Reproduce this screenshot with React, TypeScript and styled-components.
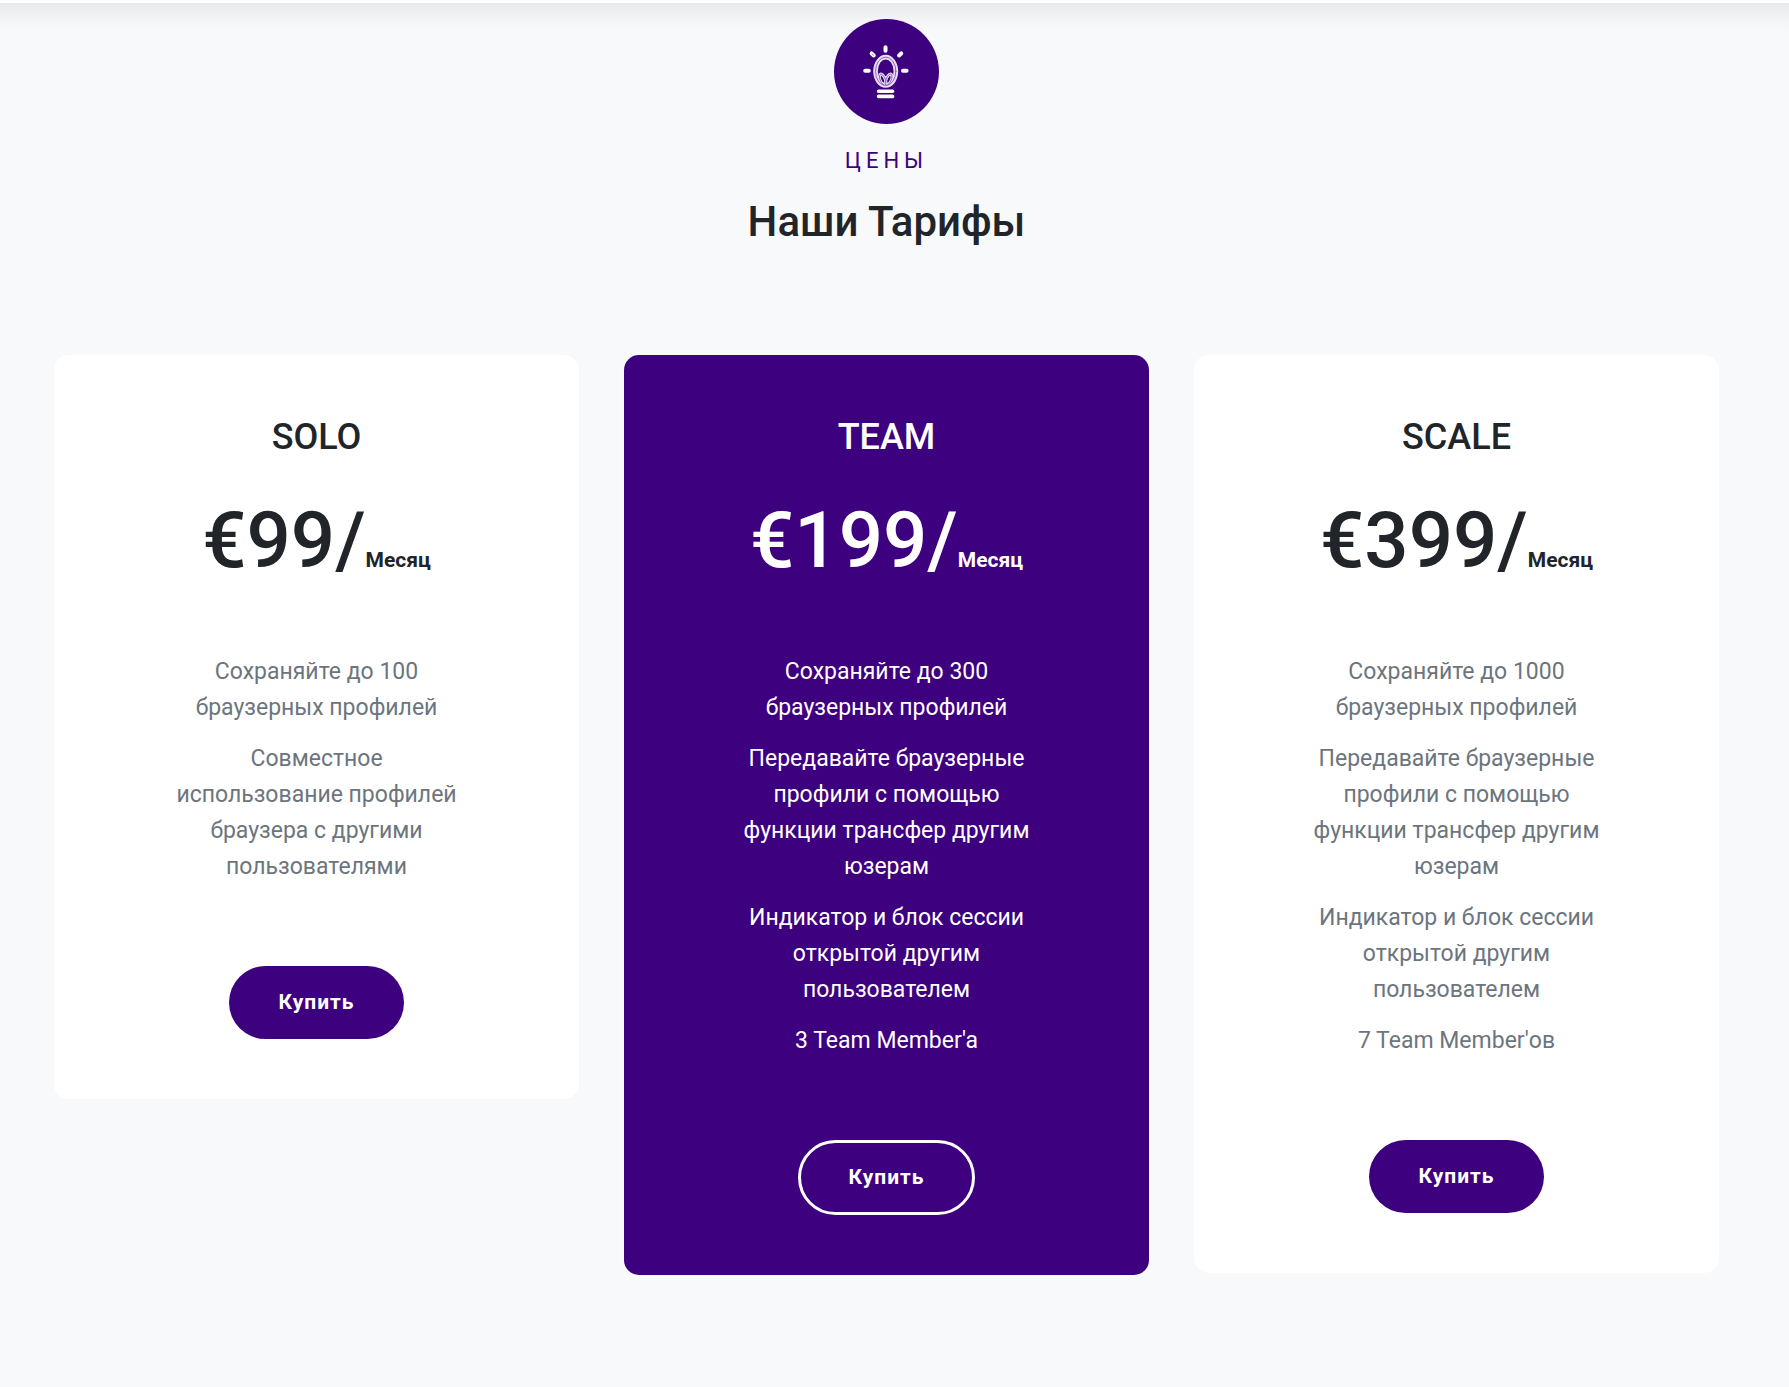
import React from "react";
import styled, { createGlobalStyle } from "styled-components";

const purple = "#3d007f";
const ink = "#212529";

const GlobalStyle = createGlobalStyle`
  *, *::before, *::after { box-sizing: border-box; }
  body {
    margin: 0;
    min-height: 100vh;
    background: #f8f9fb;
    color: ${ink};
    font-family: Roboto, "Liberation Sans", sans-serif;
  }
`;

const HeaderEdge = styled.header`
  height: 3px;
  background: #ffffff;
`;

const Pricing = styled.main`
  padding: 16px 70px 112px 54px;
  background: linear-gradient(#e7e9eb 0, #eeeff1 9px, #f5f6f8 20px, #f8f9fb 30px);
`;

const Intro = styled.header`
  display: flex;
  flex-direction: column;
  align-items: center;
  text-align: center;
`;

const IconBadge = styled.div`
  width: 105px;
  height: 105px;
  border-radius: 50%;
  background: ${purple};

  svg {
    display: block;
  }
`;

const Eyebrow = styled.p`
  margin: 21px 0 0;
  color: ${purple};
  font-size: 22px;
  line-height: 32px;
  letter-spacing: 5px;
  text-transform: uppercase;
`;

const Heading = styled.h2`
  margin: 20px 0 0;
  font-size: 42px;
  font-weight: 500;
  line-height: 50px;
`;

const Plans = styled.div`
  display: grid;
  grid-template-columns: repeat(3, minmax(0, 1fr));
  align-items: start;
  gap: 45px;
  margin-top: 108px;
`;

const Card = styled.article<{ $featured?: boolean }>`
  display: flex;
  flex-direction: column;
  align-items: center;
  padding: 60px 30px;
  border-radius: 15px;
  text-align: center;
  background: ${(p) => (p.$featured ? purple : "#ffffff")};
  color: ${(p) => (p.$featured ? "#ffffff" : ink)};
`;

const PlanName = styled.h3`
  margin: 0;
  font-size: 36px;
  font-weight: 500;
  line-height: 45px;
`;

const Price = styled.p`
  margin: 34px 0 0;
  font-size: 78px;
  font-weight: 500;
  line-height: 94px;
  white-space: nowrap;
`;

const Period = styled.span`
  font-size: 21px;
  font-weight: 700;
  line-height: 1;
`;

const Features = styled.ul<{ $featured?: boolean }>`
  width: 100%;
  max-width: 290px;
  margin: 66px 0 0;
  padding: 0;
  list-style: none;
  color: ${(p) => (p.$featured ? "#ffffff" : "#6c757d")};
  font-size: 23px;
  line-height: 36px;
`;

const Feature = styled.li`
  margin-bottom: 15px;
`;

const BuyButton = styled.button<{ $outlined?: boolean }>`
  margin-top: 66px;
  padding: ${(p) => (p.$outlined ? "18px 48px" : "20px 50px")};
  border: ${(p) => (p.$outlined ? "3px solid #ffffff" : "0")};
  border-radius: 38px;
  background: ${purple};
  color: #ffffff;
  font-family: inherit;
  font-size: 21px;
  font-weight: 700;
  line-height: 33px;
  letter-spacing: 1px;
  cursor: pointer;
`;

type Plan = {
  name: string;
  price: string;
  features: string[];
  featured?: boolean;
};

const teamFeatures = [
  "Передавайте браузерные профили с помощью функции трансфер другим юзерам",
  "Индикатор и блок сессии открытой другим пользователем",
];

const plans: Plan[] = [
  {
    name: "SOLO",
    price: "€99/",
    features: [
      "Сохраняйте до 100 браузерных профилей",
      "Совместное использование профилей браузера с другими пользователями",
    ],
  },
  {
    name: "TEAM",
    price: "€199/",
    featured: true,
    features: ["Сохраняйте до 300 браузерных профилей", ...teamFeatures, "3 Team Member'a"],
  },
  {
    name: "SCALE",
    price: "€399/",
    features: ["Сохраняйте до 1000 браузерных профилей", ...teamFeatures, "7 Team Member'ов"],
  },
];

function BulbIcon() {
  const filament =
    "M51.7 66V61.5C50.5 57 47.5 54 46 55.5C44.5 58.5 46.5 63 49.5 66M51.7 61.5C52.9 57 55.9 54 57.4 55.5C58.9 58.5 56.9 63 53.9 66";
  return (
    <svg width="105" height="105" viewBox="0 0 105 105" fill="none" strokeLinecap="round" aria-hidden="true">
      <g stroke="#ffffff" strokeWidth="4">
        <path d="M51.5 28.2v3.6M31.2 51.8h3.6M69 51.8h3.6" />
        <path d="M37.6 34.4l2.2 2M67.2 34.4l-2.2 2" />
        <path d="M44.6 72.2h14M44.6 77.4h14" strokeWidth="3.6" />
      </g>
      <path d="M38.2 35l1.4 1.2" stroke={purple} strokeWidth="0.8" opacity="0.6" />
      <g stroke="#e9dcf4">
        <ellipse cx="51.7" cy="52.3" rx="10.2" ry="14.2" strokeWidth="4.6" />
        <path d={filament} strokeWidth="3" />
      </g>
      <g stroke={purple} strokeWidth="0.9" opacity="0.6">
        <ellipse cx="51.7" cy="52.3" rx="10.2" ry="14.2" />
        <path d={filament} />
      </g>
    </svg>
  );
}

export default function App() {
  return (
    <>
      <GlobalStyle />
      <HeaderEdge />
      <Pricing>
        <Intro>
          <IconBadge>
            <BulbIcon />
          </IconBadge>
          <Eyebrow>Цены</Eyebrow>
          <Heading>Наши Тарифы</Heading>
        </Intro>
        <Plans>
          {plans.map((plan) => (
            <Card key={plan.name} $featured={plan.featured}>
              <PlanName>{plan.name}</PlanName>
              <Price>
                {plan.price}
                <Period>Месяц</Period>
              </Price>
              <Features $featured={plan.featured}>
                {plan.features.map((text) => (
                  <Feature key={text}>{text}</Feature>
                ))}
              </Features>
              <BuyButton type="button" $outlined={plan.featured}>
                Купить
              </BuyButton>
            </Card>
          ))}
        </Plans>
      </Pricing>
    </>
  );
}
